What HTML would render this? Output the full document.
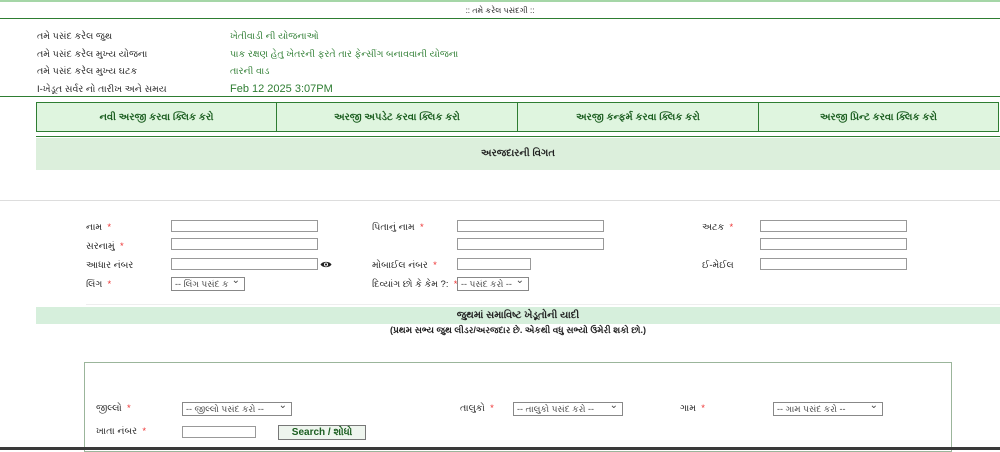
<!DOCTYPE html>
<html><head><meta charset="utf-8"><style>
*{margin:0;padding:0;box-sizing:border-box}
body{width:1000px;height:450px;overflow:hidden;background:#fff;font-family:"Liberation Sans",sans-serif;font-size:10px;color:#222;position:relative}
.a{position:absolute;white-space:nowrap}
.g{color:#2e7d32}
.hl{position:absolute;height:1px;background:#2e7d32}
.in{position:absolute;height:12px;border:1px solid #999;background:#fff}
.sel{position:absolute;height:14px;border:1px solid #888;background:#fff;font-size:9px;color:#444;padding-left:3px;line-height:12px}
.sel:after{content:"⌄";position:absolute;right:4px;top:-3px;font-size:10px}
.r{color:#e33}
.btn{position:absolute;top:102px;height:30px;background:#dff5df;border:1px solid #2e7d32;text-align:center;line-height:30px;font-weight:bold;color:#1b5e20;font-size:10px}
</style></head><body>
<div class="hl" style="top:0;left:0;width:1000px;height:2px;background:#a5d6a7"></div>
<div class="a" style="top:6px;left:0;width:1000px;text-align:center;font-size:8px">:: તમે કરેલ પસંદગી ::</div>
<div class="hl" style="top:18px;left:0;width:1000px;background:#2e7d32"></div>
<div class="a" style="top:28px;left:37px;line-height:17.5px;font-size:9.5px">તમે પસંદ કરેલ જુથ<br>તમે પસંદ કરેલ મુખ્ય યોજના<br>તમે પસંદ કરેલ મુખ્ય ઘટક<br>I-ખેડૂત સર્વર નો તારીખ અને સમય</div>
<div class="a g" style="top:28px;left:230px;line-height:17.5px;font-size:9.5px">ખેતીવાડી ની યોજનાઓ<br>પાક રક્ષણ હેતુ ખેતરની ફરતે તાર ફેન્સીંગ બનાવવાની યોજના<br>તારની વાડ<br><span style="font-size:11px">Feb 12 2025 3:07PM</span></div>
<div class="hl" style="top:96px;left:0;width:1000px"></div>
<div class="btn" style="left:36px;width:241px">નવી અરજી કરવા ક્લિક કરો</div>
<div class="btn" style="left:276px;width:242px">અરજી અપડેટ કરવા ક્લિક કરો</div>
<div class="btn" style="left:517px;width:242px">અરજી કન્ફર્મ કરવા ક્લિક કરો</div>
<div class="btn" style="left:758px;width:241px">અરજી પ્રિન્ટ કરવા ક્લિક કરો</div>
<div class="hl" style="top:136px;left:36px;width:964px"></div>
<div class="a" style="top:138px;left:36px;width:964px;height:32px;background:#dcefdc;text-align:center;line-height:32px;font-weight:bold;font-size:10px">અરજદારની વિગત</div>
<div class="hl" style="top:200px;left:0;width:1000px;background:#ddd"></div>
<div class="a" style="top:218px;left:86px;line-height:19px;font-size:9.5px">નામ &nbsp;<span class="r">*</span><br>સરનામું &nbsp;<span class="r">*</span><br>આધાર નંબર<br>લિંગ &nbsp;<span class="r">*</span></div>
<div class="in" style="top:220px;left:171px;width:147px"></div>
<div class="in" style="top:238px;left:171px;width:147px"></div>
<div class="in" style="top:258px;left:171px;width:147px"></div>
<svg class="a" style="top:260px;left:320px" width="12" height="9" viewBox="0 0 12 9"><path d="M0.5 4.5C2.5 1 9.5 1 11.5 4.5C9.5 8 2.5 8 0.5 4.5Z" fill="#222"/><circle cx="6" cy="4.5" r="2" fill="#fff"/><circle cx="6" cy="4.5" r="1.1" fill="#222"/></svg>
<div class="sel" style="top:277px;left:171px;width:74px">-- લિંગ પસંદ ક</div>
<div class="a" style="top:218px;left:372px;line-height:19px;font-size:9.5px">પિતાનું નામ &nbsp;<span class="r">*</span><br>&nbsp;<br>મોબાઈલ નંબર &nbsp;<span class="r">*</span><br>દિવ્યાંગ છો કે કેમ ?: &nbsp;<span class="r">*</span></div>
<div class="in" style="top:220px;left:457px;width:147px"></div>
<div class="in" style="top:238px;left:457px;width:147px"></div>
<div class="in" style="top:258px;left:457px;width:74px"></div>
<div class="sel" style="top:277px;left:457px;width:72px">-- પસંદ કરો --</div>
<div class="a" style="top:218px;left:702px;line-height:19px;font-size:9.5px">અટક &nbsp;<span class="r">*</span><br>&nbsp;<br>ઈ-મેઈલ</div>
<div class="in" style="top:220px;left:760px;width:147px"></div>
<div class="in" style="top:238px;left:760px;width:147px"></div>
<div class="in" style="top:258px;left:760px;width:147px"></div>
<div class="hl" style="top:304px;left:86px;width:914px;background:#eee"></div>
<div class="a" style="top:307px;left:36px;width:964px;height:17px;background:#d6efdc;text-align:center;line-height:17px;font-weight:bold;font-size:10px">જુથમાં સમાવિષ્ટ ખેડૂતોની યાદી</div>
<div class="a" style="top:325px;left:36px;width:964px;text-align:center;font-weight:bold;font-size:9px">(પ્રથમ સભ્ય જુથ લીડર/અરજદાર છે. એકથી વધુ સભ્યો ઉમેરી શકો છો.)</div>
<div class="a" style="top:362px;left:84px;width:868px;height:90px;border:1px solid #9bb59b"></div>
<div class="a" style="top:403px;left:96px;font-size:9.5px">જીલ્લો &nbsp;<span class="r">*</span></div>
<div class="sel" style="top:402px;left:182px;width:110px">-- જીલ્લો પસંદ કરો --</div>
<div class="a" style="top:403px;left:460px;font-size:9.5px">તાલુકો &nbsp;<span class="r">*</span></div>
<div class="sel" style="top:402px;left:513px;width:110px">-- તાલુકો પસંદ કરો --</div>
<div class="a" style="top:403px;left:680px;font-size:9.5px">ગામ &nbsp;<span class="r">*</span></div>
<div class="sel" style="top:402px;left:773px;width:110px">-- ગામ પસંદ કરો --</div>
<div class="a" style="top:426px;left:96px;font-size:9.5px">ખાતા નંબર &nbsp;<span class="r">*</span></div>
<div class="in" style="top:426px;left:182px;width:74px"></div>
<div class="a" style="top:425px;left:278px;width:88px;height:15px;border:1px solid #777;background:#eef5ee;text-align:center;font-weight:bold;color:#1b5e20;font-size:10px;line-height:13px">Search / શોધો</div>
<div class="a" style="top:447px;left:0;width:1000px;height:3px;background:#3a3a3a"></div>
</body></html>
